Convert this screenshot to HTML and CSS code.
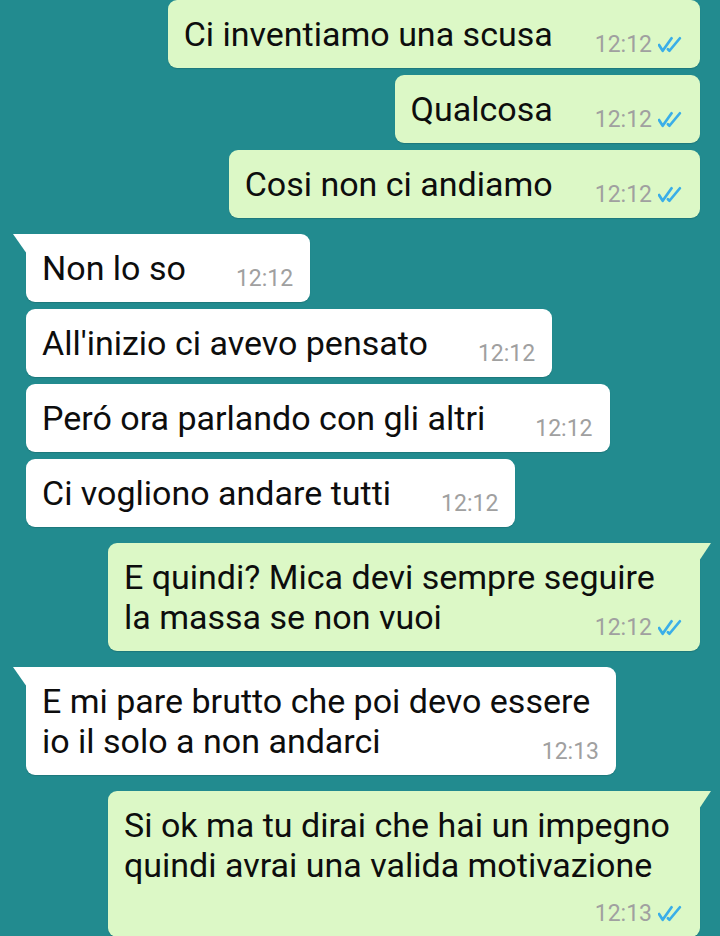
FILE: index.html
```html
<!DOCTYPE html>
<html lang="it">
<head>
    <meta charset="UTF-8">
    <meta name="viewport" content="width=device-width, initial-scale=1.0">
    <title>Chat</title>
    <link rel="stylesheet" href="styles.css">
</head>
<body>
    <div class="chat">
        <!-- messaggi inviati -->
        <div class="msg out">Ci inventiamo una scusa<span class="meta">12:12<svg class="ticks" viewBox="0 0 24 16"><path d="M1 8.5 L4.5 14 L13 2"/><path d="M9.5 12.5 L11 14 L21 2"/></svg></span></div>
        <div class="msg out">Qualcosa<span class="meta">12:12<svg class="ticks" viewBox="0 0 24 16"><path d="M1 8.5 L4.5 14 L13 2"/><path d="M9.5 12.5 L11 14 L21 2"/></svg></span></div>
        <div class="msg out">Cosi non ci andiamo<span class="meta">12:12<svg class="ticks" viewBox="0 0 24 16"><path d="M1 8.5 L4.5 14 L13 2"/><path d="M9.5 12.5 L11 14 L21 2"/></svg></span></div>

        <!-- messaggi ricevuti -->
        <div class="msg in first">Non lo so<span class="meta">12:12</span></div>
        <div class="msg in">All'inizio ci avevo pensato<span class="meta">12:12</span></div>
        <div class="msg in">Peró ora parlando con gli altri<span class="meta">12:12</span></div>
        <div class="msg in">Ci vogliono andare tutti<span class="meta">12:12</span></div>

        <div class="msg out first long">E quindi? Mica devi sempre seguire<br>la massa se non vuoi<span class="meta">12:12<svg class="ticks" viewBox="0 0 24 16"><path d="M1 8.5 L4.5 14 L13 2"/><path d="M9.5 12.5 L11 14 L21 2"/></svg></span></div>

        <div class="msg in first long">E mi pare brutto che poi devo essere<br>io il solo a non andarci<span class="meta">12:13</span></div>

        <div class="msg out first long wrap">Si ok ma tu dirai che hai un impegno<br>quindi avrai una valida motivazione<span class="meta">12:13<svg class="ticks" viewBox="0 0 24 16"><path d="M1 8.5 L4.5 14 L13 2"/><path d="M9.5 12.5 L11 14 L21 2"/></svg></span></div>
    </div>
</body>
</html>
```

FILE: styles.css
```css
* {
    box-sizing: border-box;
    margin: 0;
    padding: 0;
}
body {
    font-family: Roboto, 'Noto Sans', Arial, sans-serif;
    background-color: #228b8f;
    color: #0d0d0d;
    overflow: hidden;
}
.chat {
    display: flex;
    flex-direction: column;
    gap: 7px;
}
.msg {
    position: relative;
    display: flow-root;
    padding: 14px 17px 14px 16px;
    font-size: 34px;
    line-height: 40px;
    border-radius: 9px;
    box-shadow: 0 1px 1px rgba(0,0,0,0.14);
    white-space: nowrap;
}
.msg.first {
    margin-top: 9px;
}
.msg.long {
    width: 592px;
}
.msg.in.long {
    width: 590px;
}
.msg.out {
    align-self: flex-end;
    margin-right: 20px;
    background-color: #dcf8c6;
}
.msg.in {
    align-self: flex-start;
    margin-left: 26px;
    background-color: #fff;
}
/* coda della nuvoletta */
.msg.out.first {
    border-top-right-radius: 0;
}
.msg.out.first::after {
    content: "";
    position: absolute;
    top: 0;
    right: -11px;
    width: 12px;
    height: 18px;
    background-color: #dcf8c6;
    clip-path: polygon(0 0, 100% 0, 0 100%);
}
.msg.in.first {
    border-top-left-radius: 0;
}
.msg.in.first::before {
    content: "";
    position: absolute;
    top: 0;
    left: -13px;
    width: 14px;
    height: 20px;
    background-color: #fff;
    clip-path: polygon(0 0, 100% 0, 100% 100%);
}
.meta {
    float: right;
    margin: 22px 0 0 42px;
    font-size: 23px;
    line-height: 18px;
    color: #a0a0a0;
}
.msg.in .meta {
    margin-left: 50px;
}
.msg.wrap .meta {
    float: none;
    display: block;
    text-align: right;
    margin: 20px 0 0 0;
}
.ticks {
    display: inline-block;
    width: 25px;
    height: 17px;
    margin-left: 6px;
    vertical-align: -1px;
    fill: none;
    stroke: #3aaee8;
    stroke-width: 2.6;
    stroke-linecap: round;
    stroke-linejoin: round;
}
```
